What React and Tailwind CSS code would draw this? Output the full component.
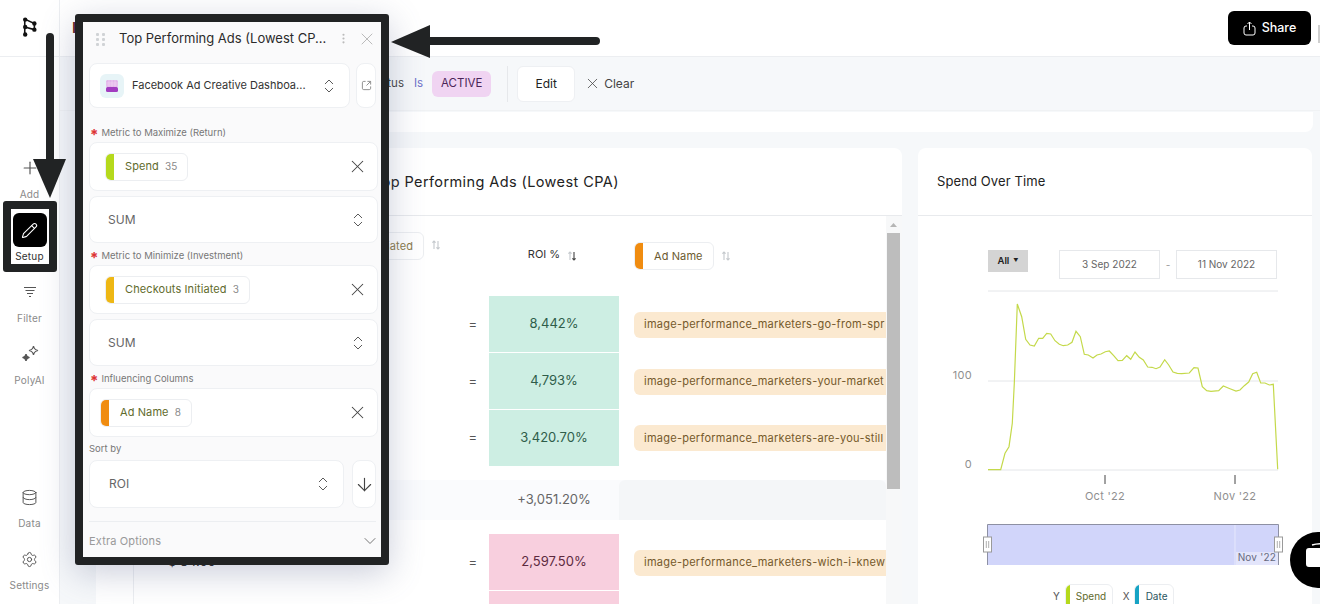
import { Plus, Pencil, Database, Settings, ChevronsUpDown, X, ArrowDown, ChevronDown, MoreVertical } from 'lucide-react'

const linePoints = [[234,539],[272,539],[285,490],[297,470],[307,400],[313,280],[322,42],[335,80],[347,148],[360,165],[373,168],[386,145],[398,145],[410,130],[422,132],[435,152],[448,163],[460,167],[473,165],[486,157],[498,124],[511,140],[523,193],[535,195],[549,204],[561,195],[573,192],[586,185],[598,183],[611,197],[624,212],[637,211],[650,197],[662,208],[675,186],[688,202],[700,210],[713,231],[726,232],[738,236],[750,231],[764,209],[776,225],[789,246],[802,250],[815,251],[838,249],[852,233],[864,234],[877,290],[890,302],[903,304],[926,302],[940,288],[960,296],[978,303],[990,300],[1003,287],[1016,276],[1028,251],[1040,247],[1052,279],[1065,279],[1078,285],[1090,283],[1103,538]]

const SidebarItem = ({ icon, label }) => (
  <div className="flex h-[52px] flex-col items-center">
    <div className="flex h-[28px] items-center justify-center text-[#555]">{icon}</div>
    <span className="mt-[6px] text-[10px] leading-[12px] tracking-[0.2px] text-[#8a8a8a]">{label}</span>
  </div>
)

const Chip = ({ color, label, count, textColor = 'text-[#5f6b2d]' }) => (
  <div className="flex h-[28px] items-center overflow-hidden rounded-md border border-[#eceef1] bg-white">
    <span className={`h-full w-[8px] shrink-0 ${color}`} />
    <span className={`ml-[11px] whitespace-nowrap text-[11px] tracking-[0.1px] ${textColor}`}>{label}</span>
    {count ? <span className="ml-[6px] mr-[10px] text-[10px] text-[#8a8a8a]">{count}</span> : <span className="w-[10px]" />}
  </div>
)

const RequiredLabel = ({ children }) => (
  <div className="flex h-[12px] items-center text-[9.5px] text-[#777]">
    <span className="ml-px mr-[3px] translate-y-[3px] text-[15px] font-bold leading-[12px] text-[#d33]">*</span>
    <span className="translate-y-[1px]">{children}</span>
  </div>
)

const ChipCard = ({ pad, chip }) => (
  <div className={`mt-[4px] flex h-[49px] items-center justify-between rounded-lg border border-[#eef0f3] bg-white pr-[9px] ${pad}`}>
    {chip}
    <X size={21} strokeWidth={1.2} className="text-[#444]" />
  </div>
)

const SumCard = () => (
  <div className="mb-[6px] mt-[5px] flex h-[47px] items-center justify-between rounded-lg border border-[#eef0f3] bg-white pl-[18px] pr-[10px]">
    <span className="text-[12px] text-[#666]">SUM</span>
    <ChevronsUpDown size={18} strokeWidth={1.3} className="text-[#555]" />
  </div>
)

const SortIcon = ({ dark }) => (
  <svg width="12" height="12" viewBox="0 0 12 12" fill="none" strokeWidth="1.1">
    <path d="M4 10V2M2.400 3.600 4 2l1.600 1.600" stroke="#c4c8cc" />
    <path d="M8 2v8M6.400 8.400 8 10l1.600-1.600" stroke={dark ? '#444' : '#c4c8cc'} />
  </svg>
)

const Row = ({ className, cell, value, pill, equals = true }) => (
  <div className={`grid grid-cols-[37px_356px_130px_267px] ${className}`}>
    <div />
    <div className="flex items-center justify-end border-l border-[#eceef1] pr-[12px] text-[13px] text-[#555]">
      {equals && '='}
    </div>
    <div className={`flex items-center justify-center text-[13px] ${cell}`}>{value}</div>
    <div className="flex items-center overflow-hidden pl-[15px]">
      {pill && (
        <div className="flex h-[26px] w-full items-center overflow-hidden whitespace-nowrap rounded-l-md bg-[#fbe9d0] pl-[10px] text-[11px] tracking-[0.25px] text-[#75592b]">
          {pill}
        </div>
      )}
    </div>
  </div>
)

const SpendChart = () => (
  <svg width="394" height="238" viewBox="0 0 394 238" className="mt-[7px] block shrink-0">
    <line x1="70" y1="5" x2="360" y2="5" stroke="#e4e6e9" />
    <line x1="70" y1="95" x2="360" y2="95" stroke="#e4e6e9" />
    <line x1="70" y1="184" x2="360" y2="184" stroke="#e4e6e9" />
    <polyline
      fill="none"
      stroke="#c4d94a"
      strokeWidth="1.2"
      points={linePoints.map(([x, y]) => `${(x / 3 - 8).toFixed(1)},${(y / 3 + 4).toFixed(1)}`).join(' ')}
    />
    <g fontSize="11" fill="#8f8f8f" letterSpacing="0.3">
      <text x="54" y="93" textAnchor="end">100</text>
      <text x="54" y="182" textAnchor="end">0</text>
      <text x="187" y="214" textAnchor="middle">Oct '22</text>
      <text x="317" y="214" textAnchor="middle">Nov '22</text>
    </g>
    <line x1="187" y1="189" x2="187" y2="198" stroke="#444" />
    <line x1="317" y1="189" x2="317" y2="198" stroke="#444" />
  </svg>
)

const RangeSlider = () => (
  <svg width="394" height="42" viewBox="0 0 394 42" className="block shrink-0">
    <path d="M69.500 41V0.500H360.500V41Z" fill="#d1d5fa" />
    <path d="M69.500 41V0.500H360.500V41" fill="none" stroke="#8d90a3" />
    <line x1="317" y1="1" x2="317" y2="41" stroke="#e6e8fc" />
    <rect x="318" y="28" width="42" height="13" fill="#e3e5fb" />
    <text x="358" y="37" textAnchor="end" fontSize="10" fill="#666a80" letterSpacing="0.2">Nov '22</text>
    {[69.5, 360.5].map((x) => (
      <g key={x}>
        <rect x={x - 4} y="13" width="8" height="15" fill="#fff" stroke="#9a9a9a" />
        <path d={`M${x - 1.2} 17v7M${x + 1.2} 17v7`} stroke="#9a9a9a" strokeWidth="0.8" />
      </g>
    ))}
  </svg>
)

const FloatingPanel = () => (
  <div className="absolute left-[75px] top-[14px] h-[551px] w-[314px] overflow-hidden rounded-[3px] border-[8px] border-[#212324] bg-[#fafafb] pl-[6px] pr-[3px] shadow-[0_8px_34px_rgba(90,100,140,0.32)]">
    <div className="flex h-[33px] items-center">
      <svg width="10" height="14" viewBox="0 0 10 14" className="ml-[7px] shrink-0" fill="#d0d3d6">
        {[1, 6, 11].map((y) => (
          <g key={y}>
            <rect x="0" y={y} width="3" height="3" rx="1" />
            <rect x="6" y={y} width="3" height="3" rx="1" />
          </g>
        ))}
      </svg>
      <span className="ml-[13px] whitespace-nowrap text-[13px] text-[#2b2b2b]">Top Performing Ads (Lowest CP...</span>
      <MoreVertical size={13} className="ml-auto shrink-0 text-[#bbb]" />
      <X size={20} strokeWidth={1.2} className="ml-[7px] mr-[1px] shrink-0 text-[#bbb]" />
    </div>

    <div className="mb-[18px] mt-[8px] flex gap-[6px] pr-[2px]">
      <div className="flex h-[45px] w-[261px] items-center rounded-lg border border-[#eef0f3] bg-white pl-[10px] pr-[11px]">
        <div className="flex h-[24px] w-[24px] shrink-0 items-center justify-center rounded-md bg-[#e7f4f7]">
          <svg width="12" height="12" viewBox="0 0 12 12">
            <rect width="12" height="7" rx="1.500" fill="#e2b4ea" />
            <path d="M0 3h12M0 5h12M3 0v7M6 0v7M9 0v7" stroke="#f4e2f6" strokeWidth="0.5" />
            <rect y="7" width="12" height="5" rx="1.500" fill="#a23cc0" />
          </svg>
        </div>
        <span className="ml-[8px] whitespace-nowrap text-[11px] text-[#333]">Facebook Ad Creative Dashboa...</span>
        <ChevronsUpDown size={18} strokeWidth={1.3} className="ml-auto shrink-0 text-[#555]" />
      </div>
      <div className="flex h-[45px] w-[20px] items-center justify-center rounded-lg border border-[#eef0f3] bg-white">
        <svg width="11" height="11" viewBox="0 0 12 12" fill="none" stroke="#888" strokeWidth="1">
          <path d="M5 1.500H3A1.500 1.500 0 0 0 1.500 3v6A1.500 1.500 0 0 0 3 10.500h6A1.500 1.500 0 0 0 10.500 9V7M7 1.500h3.500V5M10.500 1.500 6 6" />
        </svg>
      </div>
    </div>

    <RequiredLabel>Metric to Maximize (Return)</RequiredLabel>
    <ChipCard pad="pl-[15px]" chip={<Chip color="bg-[#b5d91c]" label="Spend" count="35" />} />
    <SumCard />

    <RequiredLabel>Metric to Minimize (Investment)</RequiredLabel>
    <ChipCard pad="pl-[15px]" chip={<Chip color="bg-[#eeb714]" label="Checkouts Initiated" count="3" />} />
    <SumCard />

    <RequiredLabel>Influencing Columns</RequiredLabel>
    <ChipCard pad="pl-[10px]" chip={<Chip color="bg-[#f08c10]" label="Ad Name" count="8" />} />

    <div className="mt-[6px] h-[12px] text-[9.5px] leading-[12px] text-[#777]">Sort by</div>
    <div className="mt-[5px] flex gap-[8px] pr-[2px]">
      <div className="flex h-[48px] w-[255px] items-center justify-between rounded-lg border border-[#eef0f3] bg-white pl-[19px] pr-[11px]">
        <span className="text-[12px] text-[#666]">ROI</span>
        <ChevronsUpDown size={18} strokeWidth={1.3} className="text-[#555]" />
      </div>
      <div className="flex h-[48px] w-[24px] items-center justify-center rounded-lg border border-[#eef0f3] bg-white">
        <ArrowDown size={21} strokeWidth={1.3} className="text-[#444]" />
      </div>
    </div>

    <div className="mr-[2px] mt-[13px] border-t border-[#eceef1]" />
    <div className="-mr-[2px] flex h-[38px] items-center justify-between text-[11px] tracking-[0.15px] text-[#999]">
      Extra Options
      <ChevronDown size={20} strokeWidth={1.2} className="text-[#777]" />
    </div>
  </div>
)

export default function App() {
  return (
    <div className="relative flex h-[604px] w-[1320px] overflow-hidden bg-[#f6f8fa] font-[Inter,sans-serif]">
      {/* Sidebar */}
      <aside className="flex w-[60px] shrink-0 flex-col border-r border-[#eceef1] bg-white pb-[7px]">
        <div className="flex h-[57px] shrink-0 items-center justify-center border-b border-[#eceef1] pb-[2px]">
          <svg width="14" height="20" viewBox="0 0 16 22" fill="none" stroke="#111" strokeWidth="1.8">
            <path d="M2 2v18M2 2l11 5v7L2 11" />
            <g fill="#111" stroke="none">
              <circle cx="2.500" cy="2.500" r="2.500" /><circle cx="13" cy="7" r="2.500" /><circle cx="2.500" cy="11" r="2.500" /><circle cx="13" cy="14" r="2.500" /><circle cx="2.500" cy="19.500" r="2.500" />
            </g>
          </svg>
        </div>
        <div className="mt-[97px] flex flex-col gap-[10px]">
          <SidebarItem icon={<Plus size={20} strokeWidth={1.4} />} label="Add" />
          <SidebarItem
            icon={
              <div className="-my-[3px] flex h-[34px] w-[34px] items-center justify-center rounded-md bg-black">
                <Pencil size={17} className="text-white" strokeWidth={1.5} />
              </div>
            }
            label={<span className="text-[#333]">Setup</span>}
          />
          <SidebarItem
            icon={
              <svg width="14" height="14" viewBox="0 0 14 14" fill="none" stroke="#555" strokeWidth="1.1">
                <path d="M1 2.500h12M2.500 5.500h9M4 8.500h6M6 11.500h2" />
              </svg>
            }
            label="Filter"
          />
          <SidebarItem
            icon={
              <svg width="20" height="20" viewBox="0 0 20 20" fill="none" stroke="#555" strokeWidth="1.2">
                <path d="M13.500 2c.5 2.800 1.700 4 4.500 4.500-2.800.5-4 1.700-4.500 4.500-.5-2.800-1.700-4-4.500-4.500 2.800-.5 4-1.700 4.500-4.500Z" />
                <path d="M6 10c.4 2.100 1.400 3.100 3.500 3.500-2.100.4-3.100 1.400-3.500 3.500-.4-2.100-1.400-3.100-3.500-3.500 2.100-.4 3.100-1.400 3.500-3.500Z" fill="#555" />
              </svg>
            }
            label="PolyAI"
          />
        </div>
        <div className="mt-auto flex flex-col gap-[10px]">
          <SidebarItem icon={<Database size={17} strokeWidth={1.4} />} label="Data" />
          <SidebarItem icon={<Settings size={17} strokeWidth={1.4} />} label="Settings" />
        </div>
      </aside>

      <main className="flex min-w-0 flex-1 flex-col">
        {/* Header */}
        <header className="flex h-[57px] shrink-0 items-center border-b border-[#eceef1] bg-white pl-[12px]">
          <span className="text-[15px] font-semibold text-[#5a1a1a]">I</span>
          <button className="ml-auto flex h-[34px] w-[83px] items-center justify-center gap-[6px] rounded-md bg-black text-[12.5px] font-medium text-white">
            <svg width="13" height="15" viewBox="0 0 13 15" fill="none" stroke="#fff" strokeWidth="1">
              <path d="M4 5H3a2 2 0 0 0-2 2v5a2 2 0 0 0 2 2h7a2 2 0 0 0 2-2V7a2 2 0 0 0-2-2H9M6.500 9V1M4.500 3l2-2 2 2" />
            </svg>
            Share
          </button>
          <span className="ml-[7px] mt-[12px] h-[18px] w-[2px] bg-[#cfcfcf]" />
        </header>

        {/* Filter bar */}
        <div className="flex h-[54px] shrink-0 items-center border-b border-[#f0f2f4] pl-[304px] text-[11.5px]">
          <span className="w-[40px] text-right text-[#444]">Status</span>
          <span className="ml-[10px] text-[#6c70c8]">Is</span>
          <span className="ml-[9px] flex h-[26px] w-[59px] items-center justify-center rounded-md bg-[#f0d4f2] text-[#4b2558]">ACTIVE</span>
          <span className="ml-[16px] h-[36px] border-l border-[#e6e8eb]" />
          <button className="ml-[9px] h-[36px] w-[58px] rounded-md border border-[#eef0f3] bg-white text-[12px] text-[#222]">Edit</button>
          <X size={17} strokeWidth={1.1} className="ml-[9px] text-[#444]" />
          <span className="ml-[3px] text-[12px] text-[#444]">Clear</span>
        </div>

        {/* Strip of the card above */}
        <div className="ml-[36px] mr-[7px] mt-px h-[20px] shrink-0 rounded-b-lg bg-white" />

        {/* Cards */}
        <div className="ml-[36px] mr-[8px] mt-[16px] flex min-h-0 flex-1 gap-[16px]">
          <section className="w-[806px] shrink-0 rounded-t-lg bg-white">
            <div className="flex h-[68px] items-center border-b border-[#e8eaed] pl-[277px] text-[14.5px] tracking-[0.4px] text-[#222]">
              Top Performing Ads (Lowest CPA)
            </div>
            <div className="flex">
              <div className="w-[790px] shrink-0">
                <div className="relative grid h-[80px] grid-cols-[37px_356px_130px_267px]">
                  <div />
                  <div className="flex items-start justify-end border-l border-[#eceef1] pr-[47px] pt-[16px]">
                    <Chip color="bg-[#eeb714]" label="Checkouts Initiated" textColor="text-[#8a7a4a]" />
                    <span className="ml-[6px] mt-[7px]"><SortIcon /></span>
                  </div>
                  <div className="flex items-center justify-center gap-[6px] pr-[2px] text-[11px] text-[#333]">
                    <span className="-translate-y-[2px]">ROI %</span>
                    <SortIcon dark />
                  </div>
                  <div className="flex items-center gap-[6px] pl-[15px]">
                    <Chip color="bg-[#f08c10]" label="Ad Name" textColor="text-[#6b5a30]" />
                    <SortIcon />
                  </div>
                </div>
                <Row className="h-[57px]" cell="border-b border-white bg-[#cdeee3] text-[#2f5d4a]" value="8,442%" pill="image-performance_marketers-go-from-spr" />
                <Row className="h-[57px]" cell="border-b border-white bg-[#cdeee3] text-[#2f5d4a]" value="4,793%" pill="image-performance_marketers-your-market" />
                <Row className="h-[56px]" cell="bg-[#cdeee3] text-[#2f5d4a]" value="3,420.70%" pill="image-performance_marketers-are-you-still" />
                <div className="mt-[14px] grid h-[40px] grid-cols-[37px_356px_130px_267px] bg-[#fafbfd]">
                  <div />
                  <div className="border-l border-[#eceef1]" />
                  <div className="flex items-center justify-center text-[13px] text-[#666]">+3,051.20%</div>
                  <div className="rounded-t-md bg-[#f4f6f8]" />
                </div>
                <div className="h-[14px]" />
                <div className="relative">
                  <Row className="h-[57px]" cell="border-b border-white bg-[#f8cfde] text-[#5d2a3f]" value="2,597.50%" pill="image-performance_marketers-wich-i-knew" />
                  <span className="absolute left-[72px] top-[18px] text-[13px] text-[#222]">$ 84.00</span>
                </div>
                <Row className="h-[57px]" cell="bg-[#f8cfde]" value="" equals={false} />
              </div>
              {/* Scrollbar */}
              <div className="flex w-[16px] shrink-0 flex-col bg-[#f7f8f9] pl-[1px] pr-[2px]">
                <svg width="13" height="17" viewBox="0 0 13 17" className="shrink-0"><path d="M3 11h7L6.500 7Z" fill="#b5b5b5" /></svg>
                <div className="h-[256px] bg-[#bdbdbd]" />
              </div>
            </div>
          </section>

          <section className="flex min-w-0 flex-1 flex-col rounded-t-lg bg-white">
            <div className="flex h-[68px] shrink-0 items-center border-b border-[#e8eaed] pl-[19px] text-[13px] tracking-[0.1px] text-[#222]">
              Spend Over Time
            </div>
            <div className="mt-[34px] flex h-[29px] shrink-0 items-start pl-[70px]">
              <div className="flex h-[22px] w-[40px] items-center justify-center gap-[4px] bg-[#d4d4d4] text-[9.5px] font-semibold text-[#222]">
                All
                <span className="mb-[1px] text-[5px]">▼</span>
              </div>
              <div className="ml-[31px] flex h-[29px] w-[101px] items-center justify-center border border-[#e6e8eb] text-[10px] text-[#666]">3 Sep 2022</div>
              <span className="w-[16px] pt-[8px] text-center text-[10px] text-[#999]">-</span>
              <div className="flex h-[29px] w-[101px] items-center justify-center border border-[#e6e8eb] text-[10px] text-[#666]">11 Nov 2022</div>
            </div>
            <SpendChart />
            <RangeSlider />
            <div className="flex h-[38px] shrink-0 items-start pl-[135px] pt-[18px] text-[10px]">
              <span className="mr-[5px] mt-[5px] text-[#555]">Y</span>
              <div className="flex h-[24px] w-[48px] items-center overflow-hidden rounded-t-md border border-[#eceef1]">
                <span className="h-full w-[4px] bg-[#b5d91c]" />
                <span className="ml-[6px] text-[#5f6b2d]">Spend</span>
              </div>
              <span className="ml-[10px] mr-[4px] mt-[5px] text-[#555]">X</span>
              <div className="flex h-[24px] w-[40px] items-center overflow-hidden rounded-t-md border border-[#eceef1]">
                <span className="h-full w-[4px] bg-[#16a3c4]" />
                <span className="ml-[7px] text-[#2b5560]">Date</span>
              </div>
            </div>
          </section>
        </div>
      </main>

      <FloatingPanel />

      {/* Chat bubble */}
      <div className="absolute left-[1290px] top-[532px] h-[56px] w-[56px] rounded-full bg-black">
        <svg width="30" height="36" viewBox="0 0 30 36" className="absolute left-[14px] top-[10px]">
          <path d="M8 3c6-1.500 14-1.500 22 0" fill="none" stroke="#fff" strokeWidth="1.500" />
          <path d="M5 6h25v19l-5 0-4 5-2-5H5a3 3 0 0 1-3-3V9a3 3 0 0 1 3-3Z" fill="#fff" />
        </svg>
      </div>

      {/* Annotations */}
      <div className="absolute left-[3px] top-[201px] h-[71px] w-[54px] rounded-[3px] border-[8px] border-[#212324]" />
      <svg width="1320" height="604" className="pointer-events-none absolute left-0 top-0" fill="#212324">
        <rect x="46" y="33" width="8" height="130" rx="4" />
        <path d="M33 159H66L50 198Z" />
        <rect x="425" y="37" width="175" height="8" rx="4" />
        <path d="M391 42L430 25V58Z" />
      </svg>
    </div>
  )
}
